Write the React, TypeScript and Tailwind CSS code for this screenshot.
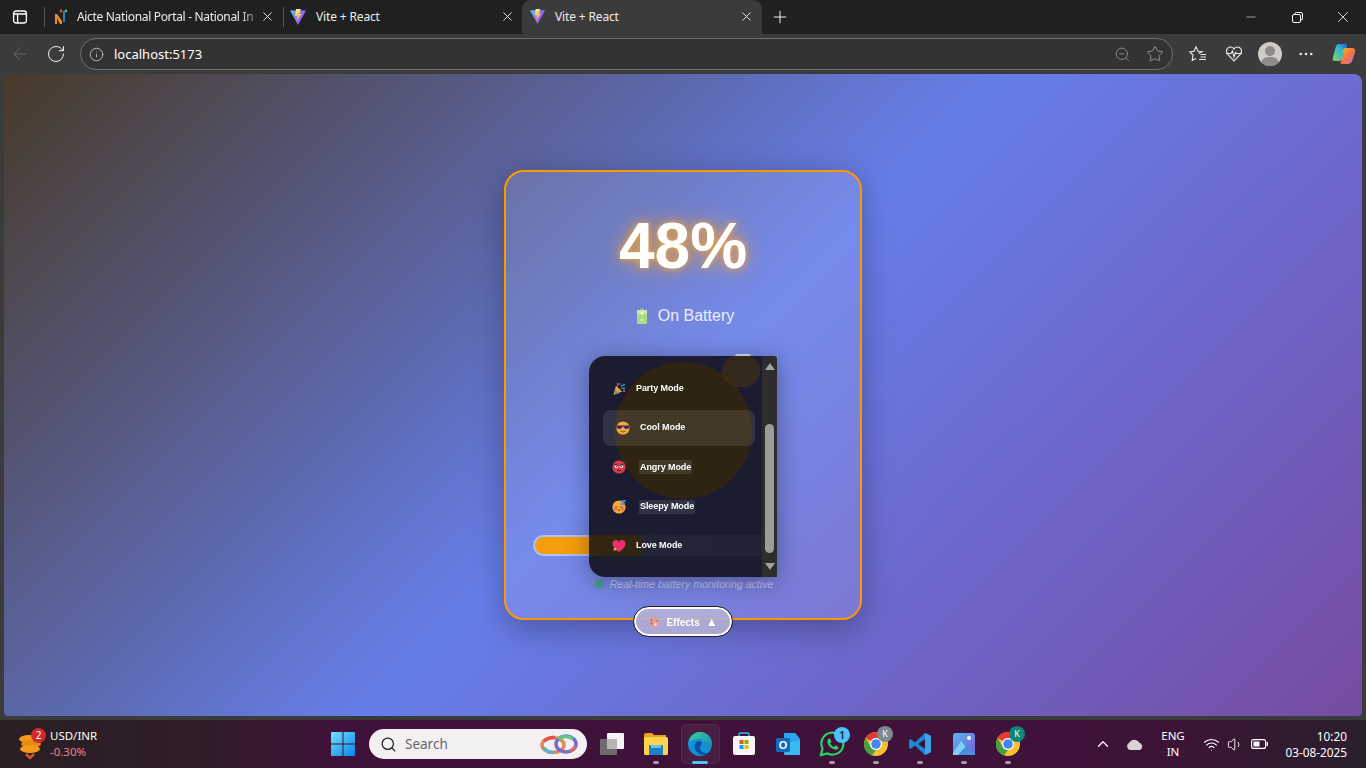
import React from "react";
import { X, Minus, Plus, RotateCw, ArrowLeft, Info, ZoomOut, Star, Search, ChevronUp, Wifi, Volume1, MoreHorizontal } from "lucide-react";

const Vite = ({ s = 18 }: { s?: number }) => (
  <svg width={s} height={s} viewBox="0 0 18 18" className="shrink-0">
    <defs>
      <linearGradient id="vg" x1="0" y1="0" x2="1" y2="0.6"><stop offset="0" stopColor="#41d1ff" /><stop offset="1" stopColor="#bd34fe" /></linearGradient>
      <linearGradient id="vb" x1="0" y1="0" x2="0" y2="1"><stop offset="0" stopColor="#ffea83" /><stop offset="1" stopColor="#ffa800" /></linearGradient>
    </defs>
    <path d="M1 2.5 L17 2.5 L9 17 Z" fill="url(#vg)" />
    <path d="M7 1 L12 1 L10 6 L12.5 6 L7.5 13.5 L8.5 8 L6 8 Z" fill="url(#vb)" />
  </svg>
);

const Chrome = () => (
  <svg width="26" height="26" viewBox="0 0 26 26">
    <circle cx="13" cy="13" r="12" fill="#fbc02d" />
    <path d="M13 1 A12 12 0 0 1 23.4 7 L13 7 A6 6 0 0 0 7.8 10 L2.6 7 A12 12 0 0 1 13 1Z" fill="#e53935" />
    <path d="M2.6 7 L7.8 16 A6 6 0 0 0 13 19 L9 24.3 A12 12 0 0 1 2.6 7Z" fill="#43a047" />
    <circle cx="13" cy="13" r="6" fill="#fff" />
    <circle cx="13" cy="13" r="4.8" fill="#4285f4" />
  </svg>
);

const Dot = () => <span className="absolute bottom-[4px] left-1/2 -translate-x-1/2 w-[6px] h-[3px] rounded-full bg-[#a39aa3]" />;

const Slot = ({ children, dot = true, active = false }: { children: React.ReactNode; dot?: boolean; active?: boolean }) => (
  <div className="relative w-[44px] h-[48px] flex items-center justify-center">
    {active && <span className="absolute left-[3px] right-[2px] top-[4px] bottom-[4px] rounded-[5px] bg-white/5 border border-white/5" />}
    <span className="relative flex">{children}</span>
    {dot && !active && <Dot />}
    {active && <span className="absolute bottom-[4px] left-1/2 -translate-x-1/2 w-[16px] h-[3px] rounded-full bg-[#4cc2ff]" />}
  </div>
);

const Party = () => (
  <svg width="14" height="14" viewBox="0 0 14 14"><path d="M1.5 13 L4 3.5 L10 9.5 Z" fill="#e8a33a" /><path d="M3 8 L7 11.5 L5 12.3 L2.5 10Z" fill="#3f8fd8" /><circle cx="7.5" cy="2" r="1" fill="#e8437a" /><path d="M9 4 L13 2.5 M9 6 L13 6.5" stroke="#3fc1c9" strokeWidth="1.2" /><path d="M5.5 1 L6 4" stroke="#b25fe0" strokeWidth="1.2" /><circle cx="12" cy="9" r="1" fill="#f06292" /></svg>
);
const Cool = () => (
  <svg width="14" height="14" viewBox="0 0 14 14"><circle cx="7" cy="7" r="6.6" fill="#f7a83c" /><path d="M0.6 4.6 H13.4 L12.8 7.2 Q10.6 8.6 8.4 7.2 L7.6 5.8 H6.4 L5.6 7.2 Q3.4 8.6 1.2 7.2Z" fill="#3a2a6a" /><path d="M4.5 10.3 Q7 11.6 9.5 10.3" stroke="#8a4b1a" strokeWidth="0.9" fill="none" /></svg>
);
const Angry = () => (
  <svg width="14" height="14" viewBox="0 0 14 14"><circle cx="7" cy="7" r="6.6" fill="#d83a4a" /><circle cx="4.6" cy="6.6" r="1.7" fill="#fff" /><circle cx="9.4" cy="6.6" r="1.7" fill="#fff" /><circle cx="4.8" cy="6.8" r="0.8" fill="#333" /><circle cx="9.2" cy="6.8" r="0.8" fill="#333" /><path d="M2.4 4 L6 5.6 M11.6 4 L8 5.6" stroke="#4a1420" strokeWidth="1" /><path d="M5 10.4 H9" stroke="#4a1420" strokeWidth="1" /></svg>
);
const Sleepy = () => (
  <svg width="14" height="14" viewBox="0 0 14 14"><circle cx="7" cy="7" r="6.6" fill="#f7a83c" /><circle cx="3.4" cy="9" r="1.6" fill="#ef6a5a" /><circle cx="10.6" cy="9" r="1.6" fill="#ef6a5a" /><path d="M3 6.6 Q4.4 7.8 5.8 6.6 M8.2 6.6 Q9.6 7.8 11 6.6" stroke="#7a3d12" strokeWidth="0.8" fill="none" /><circle cx="7" cy="10.2" r="0.9" fill="#8a3d1a" /><path d="M9 1 H13 L9.6 4 H13" stroke="#4a90d9" strokeWidth="1.3" fill="none" /></svg>
);
const Love = () => (
  <svg width="14" height="14" viewBox="0 0 14 14"><path d="M7 13 C2 9.5 0.5 7 0.5 4.6 C0.5 2.4 2.2 1 4 1 C5.3 1 6.4 1.7 7 3 C7.6 1.7 8.7 1 10 1 C11.8 1 13.5 2.4 13.5 4.6 C13.5 7 12 9.5 7 13Z" fill="#ea2f71" /><path d="M3 8 L3.6 9.6 L5.2 10.2 L3.6 10.8 L3 12.4 L2.4 10.8 L0.8 10.2 L2.4 9.6Z" fill="#ffc24a" /></svg>
);
const Palette = () => (
  <svg width="12" height="12" viewBox="0 0 12 12"><circle cx="6" cy="6" r="5.4" fill="#d9a0a0" /><circle cx="3.4" cy="4" r="1" fill="#e2574c" /><circle cx="6.4" cy="2.8" r="1" fill="#e89a3c" /><circle cx="9" cy="5" r="1" fill="#cf5f9c" /><circle cx="3.4" cy="7.6" r="1" fill="#d84a6a" /><circle cx="7.4" cy="8.4" r="1.3" fill="#efe3df" /></svg>
);
const BatteryEmoji = () => (
  <svg width="12" height="16" viewBox="0 0 12 16"><rect x="4" y="0.5" width="4" height="2" fill="#9bb98e" /><rect x="1" y="2" width="10" height="14" rx="1" fill="#a8dd83" /><rect x="1" y="2" width="10" height="4" fill="#c9e8ae" /><path d="M6 4 V7 M4.6 5.5 H7.4 M4.6 12 H7.4" stroke="#fff" strokeWidth="0.9" /></svg>
);

const rows = [
  { label: "Party Mode", icon: <Party />, box: "pl-[9px] gap-[10px]", text: "" },
  { label: "Cool Mode", icon: <Cool />, box: "pl-[13px] gap-[10px] h-[36px] w-[152px] rounded-[8px] bg-white/10", text: "" },
  { label: "Angry Mode", icon: <Angry />, box: "pl-[9px] gap-[13px]", text: "bg-white/10 px-[1px] py-[2.5px]" },
  { label: "Sleepy Mode", icon: <Sleepy />, box: "pl-[9px] gap-[13px]", text: "bg-white/10 px-[1px] py-[2.5px]" },
  { label: "Love Mode", icon: <Love />, box: "pl-[9px] gap-[10px]", text: "" },
];

export default function App() {
  return (
    <div className="w-[1366px] h-[768px] overflow-hidden flex flex-col bg-[#3b3b3b]" style={{ fontFamily: '"Noto Sans", sans-serif' }}>
      {/* Tab strip */}
      <div className="h-[34px] shrink-0 bg-[#202020] flex items-stretch text-[12px] text-[#ececec]">
        <div className="w-[44px] flex items-center justify-center pr-[4px] pb-[1px]">
          <svg width="16" height="16" viewBox="0 0 16 16" fill="none" stroke="#fff" strokeWidth="1.3"><rect x="1.6" y="2" width="12.8" height="12" rx="2.5" /><path d="M1.6 5 H14.4 M5.6 5 V14" /></svg>
        </div>
        <div className="w-[239px] flex items-center border-l border-[#555] my-[7px] pl-[9px] pb-[1px]">
          <svg width="14" height="18" viewBox="0 0 14 18" className="shrink-0"><path d="M1 16 V6 L3 6 L8 13 V16 L6 16 L3 10 V16Z" fill="#f08c1e" /><path d="M9 3 L11 3 V14 L9 14Z" fill="#2f7fc1" /><circle cx="12" cy="3" r="1.4" fill="#58b947" /><circle cx="7" cy="3" r="1.4" fill="#e35d2a" /></svg>
          <span className="ml-[9px] w-[181px] whitespace-nowrap tracking-[-0.33px]" style={{ maskImage: "linear-gradient(90deg,#000 90%,rgba(0,0,0,0.25))" }}>Aicte National Portal - National In</span>
          <X size={15} strokeWidth={1.5} className="ml-[2px] shrink-0" />
        </div>
        <div className="w-[239px] flex items-center border-l border-[#555] my-[7px] pl-[5px] pb-[1px]">
          <Vite />
          <span className="ml-[9px] flex-1 tracking-[-0.15px]">Vite + React</span>
          <X size={15} strokeWidth={1.5} className="mr-[7px] shrink-0" />
        </div>
        <div className="w-[240px] flex items-center bg-[#3b3b3b] rounded-t-[9px] pl-[7px] pb-[1px]">
          <Vite s={17} />
          <span className="ml-[9px] flex-1 tracking-[-0.15px]">Vite + React</span>
          <X size={15} strokeWidth={1.5} className="mr-[8px] shrink-0" />
        </div>
        <div className="w-[36px] flex items-center justify-center pr-[1px]"><Plus size={20} strokeWidth={1.1} color="#fff" /></div>
        <div className="flex-1" />
        <div className="w-[46px] flex items-center justify-center"><Minus size={14} strokeWidth={1} color="#fff" /></div>
        <div className="w-[46px] flex items-center justify-center">
          <svg width="11" height="11" viewBox="0 0 11 11" fill="none" stroke="#fff" strokeWidth="1"><rect x="0.5" y="2.5" width="8" height="8" rx="1.5" /><path d="M3 2.4 V1.8 A1.3 1.3 0 0 1 4.3 .5 H9 A1.5 1.5 0 0 1 10.5 2 V6.6 A1.3 1.3 0 0 1 8.8 7.8" /></svg>
        </div>
        <div className="w-[46px] flex items-center justify-center"><X size={18} strokeWidth={1.1} color="#fff" /></div>
      </div>

      {/* Toolbar */}
      <div className="h-[40px] shrink-0 flex items-center pl-[10px] pr-[10px]">
        <div className="w-[20px] flex justify-center"><ArrowLeft size={20} strokeWidth={1} color="#6d6d6d" /></div>
        <div className="w-[16px]" />
        <div className="w-[20px] flex justify-center"><RotateCw size={20} strokeWidth={1.2} color="#f0f0f0" /></div>
        <div className="ml-[14px] w-[1093px] h-[32px] rounded-full border border-[#707070] bg-[#333333] flex items-center pl-[8px] pr-[8px]">
          <Info size={15} strokeWidth={1.3} color="#d0d0d0" />
          <span className="ml-[10px] pt-[1px] text-[13px] text-white flex-1">localhost:5173</span>
          <ZoomOut size={17} strokeWidth={1.1} color="#9c9c9c" className="mr-[1px]" />
          <Star size={18} strokeWidth={1.1} color="#a8a8a8" className="ml-[14px]" />
        </div>
        <div className="ml-[16px] flex items-center">
          <svg width="18" height="18" viewBox="0 0 18 18" fill="none" stroke="#ececec" strokeWidth="1.1"><path d="M9.5 8.5 L13.2 6.8 L9 6.2 L7 1.8 L5 6.2 L0.8 6.9 L4 10 L3.2 15.5 L7 13.4" /><path d="M11.5 9.5 H17 M11.5 12 H17 M10 14.5 H17" /></svg>
          <svg className="ml-[18px]" width="18" height="16" viewBox="0 0 18 16" fill="none" stroke="#ececec" strokeWidth="1.1"><path d="M3 8.6 C-0.5 4 3 .6 6 1 C7.6 1.2 8.5 2 9 3 C9.5 2 10.4 1.2 12 1 C15 .6 18.5 4 15 8.6 L9 15 Z" /><path d="M1 7.5 H6 L7.5 5 L9 11 L10.5 6.5 L11.5 7.5 H17" /></svg>
          <span className="ml-[15px] w-[24px] h-[24px] rounded-full bg-[#cfccc7] relative overflow-hidden block">
            <span className="absolute left-[7px] top-[4px] w-[10px] h-[10px] rounded-full bg-[#8d8b87]" />
            <span className="absolute left-[3px] top-[15px] w-[18px] h-[14px] rounded-full bg-[#8d8b87]" />
          </span>
          <MoreHorizontal size={18} strokeWidth={1.5} color="#f0f0f0" className="ml-[15px]" />
          <svg className="ml-[17px]" width="24" height="22" viewBox="0 0 24 22">
            <defs>
              <linearGradient id="c1" x1="0" y1="1" x2="1" y2="0"><stop offset="0" stopColor="#8fd14f" /><stop offset=".6" stopColor="#2fb7d8" /><stop offset="1" stopColor="#1f5fd0" /></linearGradient>
              <linearGradient id="c2" x1="0" y1="0" x2="1" y2="1"><stop offset="0" stopColor="#f0c22f" /><stop offset=".5" stopColor="#f4743b" /><stop offset="1" stopColor="#c86dd7" /></linearGradient>
            </defs>
            <path d="M7 1 H14 Q16 1 14.5 5 L11 15 Q10 18 7 18 H3 Q0 18 1 14 L3.5 5 Q4.5 1 7 1Z" fill="url(#c1)" />
            <path d="M10 8 L13 5 H20 Q24 5 23 9 L20.5 17 Q19 21 16 21 H10 Q7.5 21 9 18 L12 11Z" fill="url(#c2)" />
          </svg>
        </div>
      </div>

      {/* Web page */}
      <div
        className="mx-[4px] h-[642px] shrink-0 rounded-t-[8px] rounded-b-[4px] flex items-center justify-center overflow-hidden"
        style={{ background: "linear-gradient(135deg,#483a28 0%,#667eea 50%,#764ba2 100%)", fontFamily: '"Liberation Sans", Arial, sans-serif' }}
      >
        <div className="relative w-[358px] h-[450px] rounded-[20px] border-2 border-[#ff9800] bg-white/10 shadow-[0_8px_32px_rgba(0,0,0,0.3)] flex flex-col items-center">
          <div className="mt-[34px] text-[64px] leading-[80px] font-bold text-white [text-shadow:0_0_20px_rgba(255,165,30,0.8),0_0_6px_rgba(255,170,60,0.8)]">48%</div>
          <div className="mt-[18px] pl-[4px] flex items-center gap-[10px] text-[16px] leading-[24px] text-white/85">
            <BatteryEmoji />
            <span>On Battery</span>
          </div>
          <div className="flex-1" />
          <div className="w-full pl-[27px]">
            <div className="w-[229px] h-[21px] rounded-full bg-white/10 border-2 border-white/40 overflow-hidden">
              <div className="h-full w-[48%] rounded-full bg-[#f59e0b]" />
            </div>
          </div>
          <div className="mt-[21px] mb-[27px] flex items-center gap-[6px] text-[10.6px] leading-[14px] italic text-white/50 pl-[1px]">
            <span className="w-[10px] h-[10px] rounded-full bg-[#3fa56f]/70" />
            <span>Real-time battery monitoring active</span>
          </div>

          <span className="absolute left-[229px] top-[182px] w-[16px] h-[5px] rounded-full bg-white/70" />

          {/* Effects menu */}
          <div className="absolute left-[83px] top-[184px] w-[188px] h-[221px] rounded-l-[16px] rounded-tr-[4px] bg-[#18192a]/[0.97] backdrop-blur-md shadow-[0_4px_24px_rgba(0,0,0,0.35)] overflow-hidden flex text-white">
            <div className="relative flex-1 pl-[14px] pt-[13px]">
              <span className="absolute left-[26px] top-[6px] w-[137px] h-[137px] rounded-full bg-[#3a2600]/65" />
              <span className="absolute left-[133px] top-[-1px] w-[38px] h-[32px] rounded-full bg-[#4a3608]/50" />
              <span className="absolute left-0 right-0 top-[179px] h-[21px] bg-white/[0.03]" />
              <span className="absolute left-0 top-[179px] w-[52px] h-[21px] bg-[#3a2800]/60" />
              <div className="relative flex flex-col text-[9px] font-bold leading-none tracking-[-0.08px]">
                {rows.map((r) => (
                  <div key={r.label} className="h-[39.3px] shrink-0 flex items-center">
                    <div className={`flex items-center ${r.box}`}>
                      {r.icon}
                      <span className={r.text}>{r.label}</span>
                    </div>
                  </div>
                ))}
              </div>
            </div>
            <div className="w-[15px] bg-[#2d2d2d] flex flex-col items-center justify-between py-[7px]">
              <span className="w-0 h-0 border-x-[5px] border-x-transparent border-b-[7px] border-b-[#a0a0a0]" />
              <span className="w-[9px] h-[129px] rounded-full bg-[#9c9c9c] mt-[50px] mb-[6px]" />
              <span className="w-0 h-0 border-x-[5px] border-x-transparent border-t-[7px] border-t-[#a0a0a0]" />
            </div>
          </div>

          <div className="absolute left-[128px] top-[435px] w-[98px] h-[29px] pt-[1px] rounded-full border-2 border-white outline outline-1 outline-[#222] bg-[#b5b0d6]/90 flex items-center justify-center gap-[6px] text-[10px] font-bold text-white">
            <Palette />
            <span>Effects</span>
            <span className="text-[12px] leading-none">▲</span>
          </div>
        </div>
      </div>

      <div className="h-[4px] shrink-0" />

      {/* Taskbar */}
      <div className="h-[48px] shrink-0 flex items-center text-white" style={{ background: "linear-gradient(90deg,#2a1f24 0%,#2f1c28 15%,#3f1239 25%,#3f1239 78%,#3c1436 85%,#2a1f2c 100%)" }}>
        <div className="w-[321px] flex items-center pl-[18px]">
          <span className="relative w-[32px] h-[34px] block">
            <svg width="28" height="34" viewBox="0 0 28 34"><ellipse cx="11" cy="12" rx="10" ry="4" fill="#f59a1d" /><ellipse cx="13" cy="17" rx="10" ry="4" fill="#e68a12" /><ellipse cx="12" cy="22" rx="10" ry="4" fill="#f59a1d" /><path d="M8 27 L12 31 L16 27" fill="none" stroke="#d9541e" strokeWidth="2.5" /></svg>
            <span className="absolute left-[13px] top-[1px] w-[15px] h-[15px] rounded-full bg-[#d1282b] text-[10px] leading-[15px] text-center">2</span>
          </span>
          <div className="text-[11.5px] leading-[16px]">
            <div>USD/INR</div>
            <div className="text-[#f0808a]">-0.30%</div>
          </div>
        </div>
        <Slot dot={false}>
          <svg width="24" height="24" viewBox="0 0 24 24"><defs><linearGradient id="w" x1="0" y1="0" x2="1" y2="1"><stop offset="0" stopColor="#6fe0ff" /><stop offset="1" stopColor="#0a84e8" /></linearGradient></defs><path d="M0 1 A1 1 0 0 1 1 0 H11.5 V11.5 H0Z M12.5 0 H23 A1 1 0 0 1 24 1 V11.5 H12.5Z M0 12.5 H11.5 V24 H1 A1 1 0 0 1 0 23Z M12.5 12.5 H24 V23 A1 1 0 0 1 23 24 H12.5Z" fill="url(#w)" /></svg>
        </Slot>
        <div className="ml-[4px] w-[218px] h-[30px] rounded-full bg-[#f3f0f3] flex items-center pl-[11px] pr-[7px]">
          <Search size={17} strokeWidth={1.8} color="#222" />
          <span className="ml-[8px] flex-1 text-[13.5px] text-[#666]">Search</span>
          <svg width="40" height="24" viewBox="0 0 40 24" fill="none" strokeWidth="3.5">
            <ellipse cx="13" cy="13" rx="11" ry="7.5" stroke="#e08a5a" />
            <ellipse cx="26" cy="12" rx="10" ry="8" stroke="#7a6ad0" />
            <path d="M4 9 Q9 5 15 5.5" stroke="#e0564a" /><path d="M18 7 Q25 2 33 7" stroke="#68c48a" /><path d="M4 16 Q7 20 13 20.5" stroke="#58b0d8" /><path d="M30 19 Q34 18 36 14" stroke="#d06a7a" />
          </svg>
        </div>
        <div className="ml-[3px]"><Slot dot={false}>
          <svg width="24" height="22" viewBox="0 0 24 22"><rect x="0" y="6" width="17" height="16" rx="1" fill="#6e6a6e" /><rect x="7" y="0" width="17" height="16" rx="1" fill="#f4f2f4" /><rect x="7" y="6" width="10" height="10" fill="#b8b4b8" /></svg>
        </Slot></div>
        <Slot>
          <svg width="24" height="22" viewBox="0 0 24 22"><path d="M0 2 Q0 0 2 0 H8 L10 2 H22 V6 H0Z" fill="#e8a21c" /><rect x="0" y="4" width="24" height="18" rx="1.5" fill="#fbd34d" /><rect x="5" y="12" width="14" height="10" rx="1" fill="#1f7fc4" /><rect x="7" y="12" width="10" height="3" fill="#6cc2ee" /></svg>
        </Slot>
        <Slot active>
          <svg width="24" height="24" viewBox="0 0 24 24"><defs><linearGradient id="e1" x1="0" y1="0" x2="1" y2="1"><stop offset="0" stopColor="#3dd68c" /><stop offset="1" stopColor="#0f7fc8" /></linearGradient></defs><circle cx="12" cy="12" r="12" fill="#1392dc" /><path d="M1 9 C3 2 9 0 12 0 C19 0 24 6 24 12 C24 17 18 18 16 15 C19 13 17 7 11 7 C6 7 2 10 1 9Z" fill="url(#e1)" /><path d="M12 9 C7 9 5 14 8 19 C11 23 16 24 20 21 C14 22 10 17 13 13 C14 11 14 10 12 9Z" fill="#0b4f9e" /></svg>
        </Slot>
        <Slot dot={false}>
          <svg width="24" height="24" viewBox="0 0 24 24" fill="none"><path d="M7 5 V2.5 Q7 1 8.5 1 H15.5 Q17 1 17 2.5 V5" stroke="#36b4e8" strokeWidth="1.5" /><rect x="1" y="4" width="22" height="19" rx="2" fill="#f7f5f5" /><rect x="7.5" y="8" width="4" height="4" fill="#f25022" /><rect x="12.5" y="8" width="4" height="4" fill="#7fba00" /><rect x="7.5" y="13" width="4" height="4" fill="#00a4ef" /><rect x="12.5" y="13" width="4" height="4" fill="#ffb900" /></svg>
        </Slot>
        <Slot dot={false}>
          <svg width="24" height="24" viewBox="0 0 24 24"><path d="M8 1 H19 L24 7 V22 Q24 23 23 23 H9 Z" fill="#1490df" /><path d="M8 1 H19 L24 7 L16 12 L8 7Z" fill="#28a8ea" /><path d="M8 12 L24 8 V22 Q24 23 23 23 H8Z" fill="#50d9ff" opacity=".6" /><rect x="0" y="6" width="14" height="14" rx="1.5" fill="#0f6cbd" /><text x="7" y="17" textAnchor="middle" fontSize="11" fontWeight="700" fill="#fff" fontFamily="Liberation Sans, sans-serif">O</text></svg>
        </Slot>
        <Slot>
          <span className="relative block">
            <svg width="26" height="26" viewBox="0 0 26 26" fill="none"><path d="M2 24 L3.5 17.5 A11 11 0 1 1 8.5 22.5 Z" stroke="#25d366" strokeWidth="2.2" /><path d="M9 8 L11 7.5 L12.5 11 L11 12.5 Q12.5 15 15 16 L16.5 14.5 L19.5 16 L19 18 Q16 20 11 16 Q7 12 9 8Z" fill="#25d366" /></svg>
            <span className="absolute -right-[5px] -top-[4px] w-[16px] h-[16px] rounded-full bg-[#4cc2ff] text-[#1b1b1b] text-[10px] leading-[16px] text-center font-semibold">1</span>
          </span>
        </Slot>
        <Slot>
          <span className="relative block"><Chrome /><span className="absolute -right-[4px] -top-[5px] w-[16px] h-[16px] rounded-full bg-[#7d8a90] text-[9px] leading-[16px] text-center">K</span></span>
        </Slot>
        <Slot>
          <svg width="24" height="24" viewBox="0 0 24 24"><path d="M17 1 L23 4 V20 L17 23 L7 13.5 L2.5 17 L1 16 V8 L2.5 7 L7 10.5Z" fill="#1e88d8" /><path d="M17 7 L10 12 L17 17Z" fill="#3f1239" /><path d="M17 1 L23 4 V20 L17 23Z" fill="#3ba7e8" /></svg>
        </Slot>
        <Slot>
          <svg width="22" height="22" viewBox="0 0 22 22"><defs><linearGradient id="ph" x1="0" y1="0" x2="1" y2="1"><stop offset="0" stopColor="#55b8f0" /><stop offset="1" stopColor="#7a5bd8" /></linearGradient></defs><rect width="22" height="22" rx="3" fill="url(#ph)" /><circle cx="16" cy="5" r="2" fill="#fff" /><path d="M0 20 L8 8 L16 18 L22 20 V22 H0Z" fill="#7ed0f5" /><path d="M5 22 L14 12 L22 20 V22Z" fill="#4a8ee0" /></svg>
        </Slot>
        <Slot>
          <span className="relative block"><Chrome /><span className="absolute -right-[4px] -top-[5px] w-[16px] h-[16px] rounded-full bg-[#0f8576] text-[9px] leading-[16px] text-center">K</span></span>
        </Slot>
        <div className="flex-1" />
        <div className="w-[34px] flex justify-center"><ChevronUp size={18} strokeWidth={1.6} color="#fff" /></div>
        <div className="w-[30px] flex justify-center">
          <svg width="18" height="12" viewBox="0 0 18 12"><path d="M4 12 A4 4 0 0 1 3.5 4.5 A5.5 5.5 0 0 1 13 4.5 A4 4 0 0 1 14 12Z" fill="#d9d4d6" /></svg>
        </div>
        <div className="w-[46px] text-center text-[11.5px] leading-[16px]"><div>ENG</div><div>IN</div></div>
        <div className="ml-[7px] flex items-center">
          <Wifi size={17} strokeWidth={1.5} color="#fff" />
          <Volume1 size={17} strokeWidth={1.3} color="#fff" className="ml-[7px]" />
          <svg className="ml-[7px]" width="17" height="10" viewBox="0 0 17 10" fill="none"><rect x=".6" y=".6" width="14" height="8.8" rx="2" stroke="#fff" strokeWidth="1.1" /><rect x="2.5" y="2.5" width="6" height="5" fill="#fff" /><rect x="15.5" y="3" width="1.5" height="4" fill="#fff" /></svg>
        </div>
        <div className="w-[98px] pr-[19px] text-right text-[11.8px] leading-[16px]"><div>10:20</div><div className="whitespace-nowrap">03-08-2025</div></div>
      </div>
    </div>
  );
}
